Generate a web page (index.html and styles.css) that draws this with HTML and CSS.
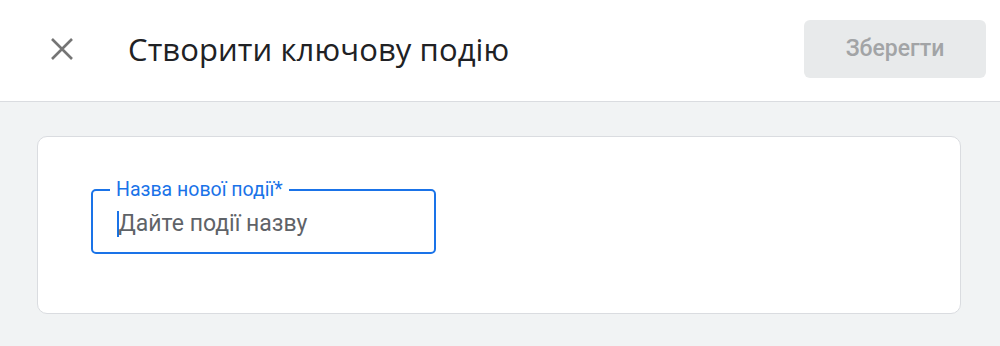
FILE: index.html
```html
<!DOCTYPE html>
<html lang="uk">
<head>
<meta charset="utf-8">
<link rel="stylesheet" href="styles.css">
</head>
<body>
<header class="topbar">
  <button class="close" aria-label="Закрити">
    <svg width="24" height="24" viewBox="0 0 24 24"><path d="M2 2 L22 22 M22 2 L2 22" stroke="#757575" stroke-width="2.6" fill="none"/></svg>
  </button>
  <h1 class="title">Створити ключову подію</h1>
  <button class="save" disabled>Зберегти</button>
</header>
<main class="content">
  <section class="card">
    <div class="field">
      <span class="field-label">Назва нової події*</span>
      <div class="field-input"><span class="caret"></span><span class="placeholder">Дайте події назву</span></div>
    </div>
  </section>
</main>
</body>
</html>
```
FILE: styles.css
```css
* { box-sizing: border-box; }
html, body { margin: 0; height: 100%; }
body {
  background: #f1f3f4;
  font-family: Roboto, "Noto Sans", sans-serif;
  color: #202124;
}
.topbar {
  height: 102px;
  background: #fff;
  border-bottom: 1px solid #dadce0;
  display: flex;
  align-items: center;
  padding: 0 14px 4px 50px;
}
.close {
  border: 0;
  background: none;
  padding: 0;
  width: 24px;
  height: 24px;
  display: flex;
  margin-right: 54px;
}
.title {
  margin: 0;
  font-family: "Open Sans", Roboto, sans-serif;
  font-weight: 400;
  font-size: 31px;
  letter-spacing: 0.1px;
  color: #202124;
  flex: 1;
}
.save {
  width: 182px;
  height: 58px;
  border: 0;
  border-radius: 6px;
  background: #e8eaeb;
  color: #a2a4a6;
  font-family: Roboto, sans-serif;
  font-size: 23px;
  font-weight: 500;
}
.content {
  padding: 34px 39px 0 37px;
}
.card {
  background: #fff;
  border: 1px solid #dadce0;
  border-radius: 10px;
  height: 178px;
  padding: 52px 0 0 53px;
}
.field {
  position: relative;
  width: 345px;
}
.field-label {
  position: absolute;
  left: 19px;
  top: -9px;
  padding: 0 6px;
  background: #fff;
  color: #1a73e8;
  font-size: 19.5px;
  line-height: 20px;
}
.field-input {
  height: 65px;
  border: 2px solid #1a73e8;
  border-radius: 5px;
  display: flex;
  align-items: center;
  padding: 4px 0 0 24px;
}
.caret {
  width: 1.5px;
  height: 26px;
  background: #1a73e8;
}
.placeholder {
  font-size: 23px;
  color: #5f6368;
}
```
